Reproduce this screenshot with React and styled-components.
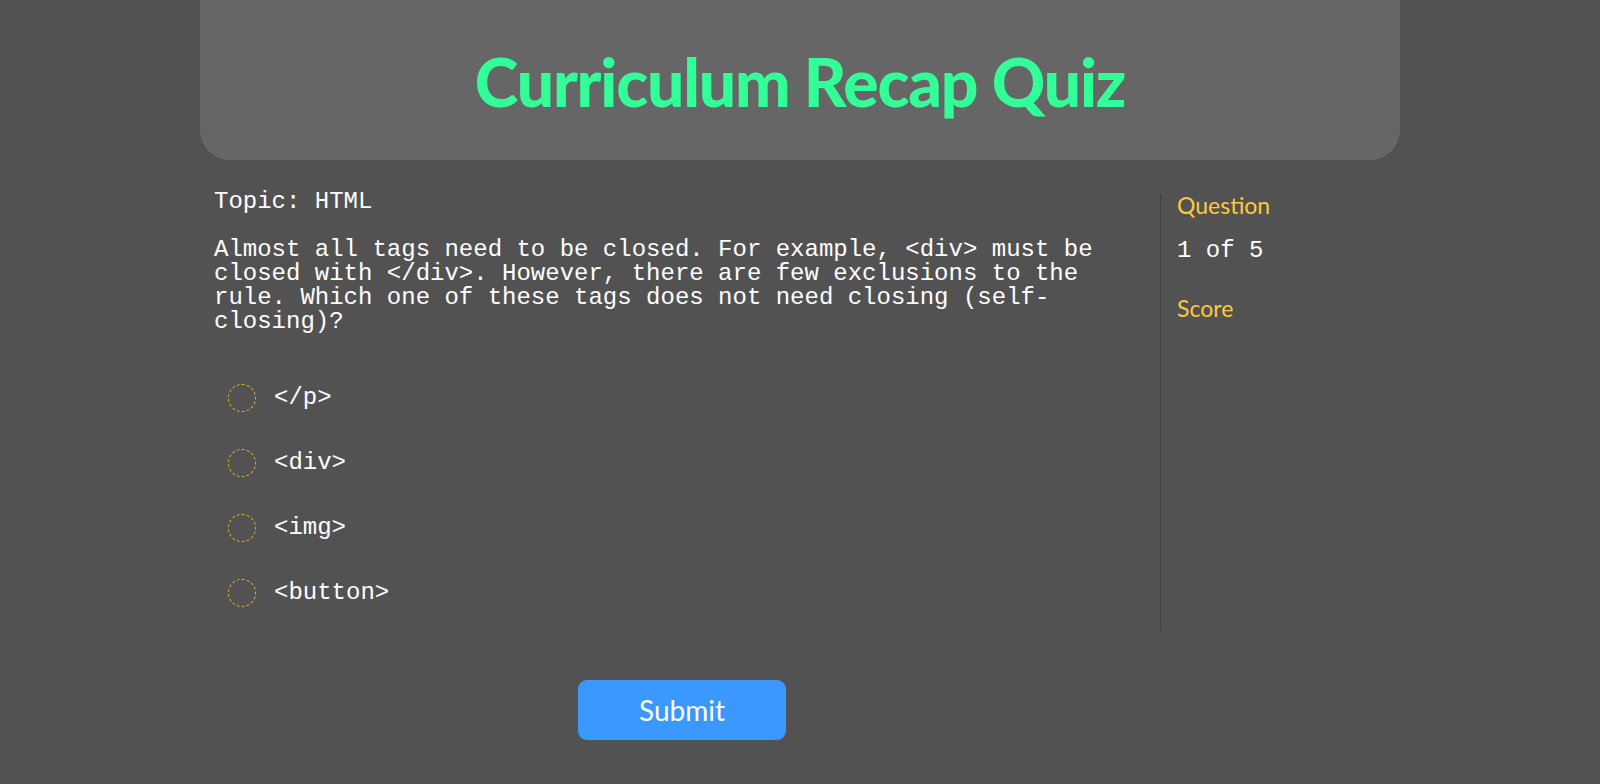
import styled, { createGlobalStyle } from "styled-components";

const GlobalStyle = createGlobalStyle`
  body {
    margin: 0;
    background: #525252;
    font-family: "Lato", "Open Sans", sans-serif;
  }
`;

const Page = styled.div`
  min-height: 100vh;
  display: flex;
  flex-direction: column;
  align-items: center;
`;

const Header = styled.header`
  width: 1200px;
  height: 160px;
  box-sizing: border-box;
  padding-top: 2px;
  background: #666666;
  border-radius: 0 0 30px 30px;
  display: flex;
  align-items: center;
  justify-content: center;
`;

const Title = styled.h1`
  margin: 0;
  font-family: "Lato", sans-serif;
  font-weight: 900;
  font-size: 66px;
  letter-spacing: -1.2px;
  color: #33ff99;
`;

const QuizBody = styled.main`
  width: 1200px;
  margin-top: 30px;
  display: grid;
  grid-template-columns: 960px 240px;
`;

const QuestionPane = styled.section`
  padding: 0 14px 6px;
  color: #ffffff;
  font-family: "Liberation Mono", "DejaVu Sans Mono", monospace;
  font-size: 24px;
  line-height: 24px;
`;

const Topic = styled.p`
  margin: 0;
`;

const QuestionText = styled.p`
  margin: 24px 0 0;
`;

const OptionList = styled.ul`
  list-style: none;
  margin: 31px 0 0;
  padding: 0;
`;

const Option = styled.li`
  height: 65px;
  display: flex;
  align-items: center;
  gap: 18px;
  padding-left: 14px;
  cursor: pointer;
`;

const Radio = styled.span`
  width: 28px;
  height: 28px;
  box-sizing: border-box;
  border-radius: 50%;
  border: 1px dashed #e2b12a;
  flex-shrink: 0;
`;

const Sidebar = styled.aside`
  margin-top: 4px;
  border-left: 1px solid #3f3f3f;
  padding: 0 16px;
`;

const Label = styled.h3`
  margin: ${(p) => p.$gap}px 0 0;
  font-family: "Lato", sans-serif;
  font-weight: 400;
  font-size: 23px;
  line-height: 22px;
  color: #ffc83d;
`;

const Value = styled.p`
  margin: 23px 0 0;
  font-family: "Liberation Mono", monospace;
  font-size: 24px;
  line-height: 24px;
  color: #ffffff;
`;

const Actions = styled.div`
  width: 1200px;
  margin-top: 49px;
  display: grid;
  grid-template-columns: 960px 240px;
`;

const SubmitButton = styled.button`
  justify-self: center;
  margin-left: 4px;
  width: 208px;
  height: 60px;
  border: none;
  border-radius: 9px;
  background: #3a98ff;
  color: #ffffff;
  font-family: "Lato", sans-serif;
  font-size: 28px;
  cursor: pointer;
`;

const options = ["</p>", "<div>", "<img>", "<button>"];

export default function App() {
  return (
    <Page>
      <GlobalStyle />
      <Header>
        <Title>Curriculum Recap Quiz</Title>
      </Header>
      <QuizBody>
        <QuestionPane>
          <Topic>Topic: HTML</Topic>
          <QuestionText>
            Almost all tags need to be closed. For example, &lt;div&gt; must be
            closed with &lt;/div&gt;. However, there are few exclusions to the
            rule. Which one of these tags does not need closing (self-closing)?
          </QuestionText>
          <OptionList>
            {options.map((o) => (
              <Option key={o}>
                <Radio />
                {o}
              </Option>
            ))}
          </OptionList>
        </QuestionPane>
        <Sidebar>
          <Label $gap={0}>Question</Label>
          <Value>1 of 5</Value>
          <Label $gap={34}>Score</Label>
        </Sidebar>
      </QuizBody>
      <Actions>
        <SubmitButton>Submit</SubmitButton>
      </Actions>
    </Page>
  );
}
